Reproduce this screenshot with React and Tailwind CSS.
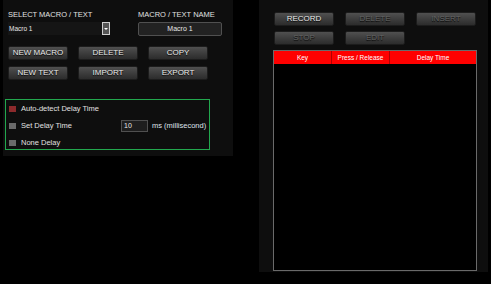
const btn =
  'h-[14px] w-[60px] rounded-[2px] border border-[#1c1c1c] bg-gradient-to-b from-[#505050] to-[#2c2c2c] flex items-center justify-center text-[8px] leading-none [text-shadow:0_1px_1px_#000]';

function Button({ label, disabled }) {
  return (
    <div className={`${btn} ${disabled ? 'text-[#626262]' : 'text-[#e8e8e8]'}`}>
      {label}
    </div>
  );
}

function Check({ on, label, children }) {
  return (
    <div className="flex items-center h-[12px]">
      <div
        className={`w-[7px] h-[6px] ${on ? 'bg-[#8c2a2c]' : 'bg-[#6a6a6a]'}`}
      />
      <span className="ml-[5px] w-[95px] text-[7.5px] text-[#e0e0e0]">{label}</span>
      {children}
    </div>
  );
}

export default function App() {
  return (
    <div
      className="w-[491px] h-[284px] bg-black flex items-start"
      style={{ fontFamily: '"Liberation Sans", Arial, sans-serif' }}
    >
      {/* left panel */}
      <div className="ml-[3px] w-[230px] h-[156px] bg-[#0e0e0e] pt-[11px] px-[5px]">
        <div className="flex">
          <div className="w-[102px]">
            <div className="h-[11px] text-[7.5px] leading-none text-[#e0e0e0]">SELECT MACRO / TEXT</div>
            <div className="h-[13px] flex bg-[#151515]">
              <span className="flex-1 pl-[1px] text-[6.5px] leading-[13px] text-[#e8e8e8]">Macro 1</span>
              <div className="w-[8px] h-[13px] border border-[#cfcfcf] bg-[#555] flex items-center justify-center">
                <div className="w-0 h-0 border-l-[2px] border-r-[2px] border-t-[2px] border-l-transparent border-r-transparent border-t-white" />
              </div>
            </div>
          </div>
          <div className="ml-[28px] w-[84px]">
            <div className="h-[11px] text-[7.5px] leading-none text-[#e0e0e0]">MACRO / TEXT NAME</div>
            <div className="h-[14px] rounded-[2px] border border-[#505050] bg-[#222] text-center text-[7px] leading-[12px] text-[#e8e8e8]">
              Macro 1
            </div>
          </div>
        </div>

        <div className="mt-[10px] grid grid-cols-[60px_60px_60px] gap-x-[10px] gap-y-[6px]">
          <Button label="NEW MACRO" />
          <Button label="DELETE" />
          <Button label="COPY" />
          <Button label="NEW TEXT" />
          <Button label="IMPORT" />
          <Button label="EXPORT" />
        </div>

        <div className="mt-[19px] -ml-[3px] w-[205px] h-[51px] border border-[#22a84e] pl-[3px] pt-[3px] flex flex-col gap-[5px]">
          <Check on label="Auto-detect Delay Time" />
          <Check label="Set Delay Time">
            <div className="ml-[5px] w-[27px] h-[12px] border border-[#505050] bg-[#1e1e1e] text-[7px] leading-[10px] pl-[2px] text-[#e8e8e8]">
              10
            </div>
            <span className="ml-[4px] text-[7.5px] text-[#dfe3ea]">ms (millisecond)</span>
          </Check>
          <Check label="None Delay" />
        </div>
      </div>

      {/* right panel */}
      <div className="ml-[26px] w-[229px] h-[272px] bg-[#0e0e0e] pt-[12px] pl-[15px]">
        <div className="grid grid-cols-[60px_60px_60px] gap-x-[11px] gap-y-[5px]">
          <Button label="RECORD" />
          <Button label="DELETE" disabled />
          <Button label="INSERT" disabled />
          <Button label="STOP" disabled />
          <Button label="EDIT" disabled />
        </div>
        <div className="mt-[5px] -ml-[1px] w-[204px] h-[221px] border border-[#6a6a6a] bg-black">
          <div className="flex h-[13px] bg-[#ff0000] text-[6.5px] leading-[13px] text-white">
            <div className="w-[58px] text-center border-r border-[#b00000]">Key</div>
            <div className="w-[58px] text-center border-r border-[#b00000]">Press / Release</div>
            <div className="flex-1 text-center">Delay Time</div>
          </div>
        </div>
      </div>
    </div>
  );
}
